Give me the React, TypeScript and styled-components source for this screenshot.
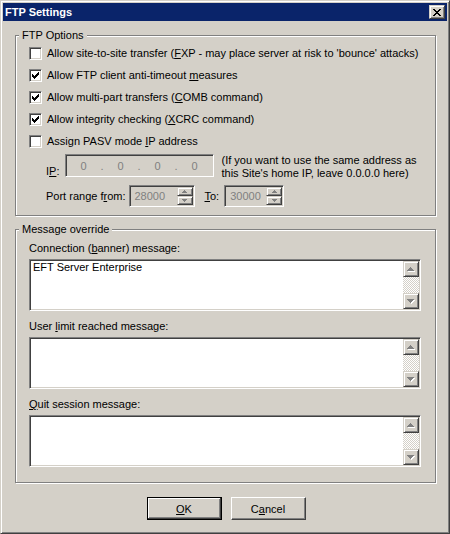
import React from 'react';
import styled, { createGlobalStyle } from 'styled-components';

const Global = createGlobalStyle`
  html, body { margin: 0; padding: 0; background: #D4D0C8; }
  body { font-family: "Liberation Sans", Arial, sans-serif; font-size: 11px; color: #000; }
  * { box-sizing: border-box; }
  u { text-decoration: underline; text-underline-offset: 1px; text-decoration-thickness: 1px; }
`;

const Window = styled.div`
  width: 450px;
  height: 534px;
  background: #D4D0C8;
  border: 1px solid;
  border-color: #D4D0C8 #404040 #404040 #D4D0C8;
  box-shadow: inset 1px 1px #fff, inset -1px -1px #808080;
  padding: 2px;
  display: flex;
  flex-direction: column;
`;

const TitleBar = styled.div`
  height: 18px;
  margin-bottom: 1px;
  background: #0A246A;
  display: flex;
  align-items: center;
  justify-content: space-between;
  padding: 0 2px 0 2px;
`;

const TitleText = styled.span`
  color: #fff;
  font-weight: bold;
  font-size: 11px;
  line-height: 18px;
`;

const raised = `
  border: 1px solid;
  border-color: #D4D0C8 #404040 #404040 #D4D0C8;
  box-shadow: inset 1px 1px #fff, inset -1px -1px #808080;
  background: #D4D0C8;
`;

const sunken = `
  border: 1px solid;
  border-color: #808080 #fff #fff #808080;
  box-shadow: inset 1px 1px #404040, inset -1px -1px #D4D0C8;
`;

const CloseButton = styled.div`
  width: 16px;
  height: 14px;
  ${raised}
  display: flex;
  align-items: center;
  justify-content: center;
`;

const Content = styled.div`
  flex: 1;
  display: flex;
  flex-direction: column;
  padding: 13px 10px 0 12px;
`;

const Group = styled.div<{ $pt: number; $pb: number }>`
  position: relative;
  width: 421px;
  border: 1px solid #808080;
  box-shadow: inset 1px 1px #fff, 1px 1px #fff;
  padding: ${(p) => p.$pt}px 12px ${(p) => p.$pb}px 13px;
  margin-bottom: 13px;
  display: flex;
  flex-direction: column;
`;

const Legend = styled.span`
  position: absolute;
  top: -7px;
  left: 3px;
  padding: 0 3px;
  background: #D4D0C8;
  line-height: 13px;
`;

const CheckList = styled.div`
  display: flex;
  flex-direction: column;
  gap: 9px;
`;

const CheckRow = styled.label`
  display: flex;
  align-items: center;
  gap: 5px;
  height: 13px;
  line-height: 13px;
  white-space: nowrap;
`;

const CheckBox = styled.span`
  width: 13px;
  height: 13px;
  flex: none;
  background: #fff;
  ${sunken}
  display: flex;
  align-items: center;
  justify-content: center;
`;

const IPRow = styled.div`
  display: flex;
  align-items: flex-start;
  height: 23px;
  margin-top: 6px;
  padding-left: 17px;
`;

const IPLabel = styled.span`
  line-height: 13px;
  margin-top: 11px;
  margin-right: 6px;
`;

const IPField = styled.div`
  width: 149px;
  height: 23px;
  ${sunken}
  background: #D4D0C8;
  display: flex;
  align-items: center;
  padding-left: 2px;
  color: #808080;
`;

const Octet = styled.span`
  width: 30px;
  text-align: center;
`;

const Dot = styled.span`
  width: 7px;
  text-align: center;
`;

const Hint = styled.div`
  margin-left: 7px;
  line-height: 13px;
  white-space: nowrap;
`;

const PortRow = styled.div`
  display: flex;
  align-items: center;
  margin-top: 8px;
  padding-left: 17px;
  line-height: 13px;
`;

const PortLabel = styled.span<{ $ml?: number; $mr: number }>`
  margin-left: ${(p) => p.$ml ?? 0}px;
  margin-right: ${(p) => p.$mr}px;
`;

const SpinField = styled.div<{ $w: number }>`
  width: ${(p) => p.$w}px;
  height: 22px;
  ${sunken}
  background: #D4D0C8;
  display: flex;
  align-items: stretch;
  color: #808080;
`;

const SpinText = styled.span`
  flex: 1;
  padding-left: 5px;
  display: flex;
  align-items: center;
`;

const SpinButtons = styled.div`
  width: 16px;
  margin: 1px 1px 1px 0;
  display: flex;
  flex-direction: column;
`;

const SpinBtn = styled.div`
  flex: 1;
  ${raised}
  display: flex;
  align-items: center;
  justify-content: center;
`;

const MsgLabel = styled.div`
  line-height: 13px;
  margin-bottom: 4px;
`;

const MsgBox = styled.div`
  width: 392px;
  height: 52px;
  ${sunken}
  background: #fff;
  display: flex;
  margin-bottom: 9px;
  &:last-child { margin-bottom: 0; }
`;

const MsgText = styled.div`
  flex: 1;
  padding: 1px 3px 0 3px;
  line-height: 13px;
`;

const ScrollBar = styled.div`
  width: 16px;
  margin: 1px 1px 1px 0;
  display: flex;
  flex-direction: column;
`;

const ScrollBtn = styled.div`
  width: 16px;
  height: 16px;
  flex: none;
  ${raised}
  display: flex;
  align-items: center;
  justify-content: center;
`;

const Track = styled.div`
  flex: 1;
  background: repeating-conic-gradient(#fff 0 25%, #D4D0C8 0 50%);
  background-size: 2px 2px;
`;

const ButtonRow = styled.div`
  display: flex;
  justify-content: center;
  gap: 9px;
  margin-top: 1px;
`;

const Button = styled.button<{ $default?: boolean }>`
  width: 75px;
  height: 23px;
  padding: 0;
  font-family: inherit;
  font-size: 11px;
  color: #000;
  background: #D4D0C8;
  border: 1px solid;
  ${(p) =>
    p.$default
      ? `border-color: #000;
         box-shadow: inset -1px -1px #404040, inset 1px 1px #fff, inset -2px -2px #808080;`
      : `border-color: #fff #404040 #404040 #fff;
         box-shadow: inset -1px -1px #808080;`}
`;

const Pixels: React.FC<{ rows: string[]; color: string; shadow?: string }> = ({ rows, color, shadow }) => {
  const w = rows[0].length + (shadow ? 1 : 0);
  const h = rows.length + (shadow ? 1 : 0);
  const rects: React.ReactNode[] = [];
  const draw = (dx: number, fill: string, key: string) => {
    rows.forEach((r, y) =>
      r.split('').forEach((c, x) => {
        if (c === 'X') rects.push(<rect key={`${key}${x}-${y}`} x={x + dx} y={y + dx} width={1} height={1} fill={fill} />);
      })
    );
  };
  if (shadow) draw(1, shadow, 's');
  draw(0, color, 'm');
  return (
    <svg width={w} height={h} viewBox={`0 0 ${w} ${h}`} shapeRendering="crispEdges" style={{ display: 'block' }}>
      {rects}
    </svg>
  );
};

const CHECK = ['......X', '.....XX', 'X...XXX', 'XX.XXX.', 'XXXXX..', '.XXX...', '..X....'];
const CLOSE = ['XX....XX', '.XX..XX.', '..XXXX..', '...XX...', '..XXXX..', '.XX..XX.', 'XX....XX'];
const UP = ['...X...', '..XXX..', '.XXXXX.', 'XXXXXXX'];
const DOWN = ['XXXXXXX', '.XXXXX.', '..XXX..', '...X...'];
const SUP = ['..X..', '.XXX.', 'XXXXX'];
const SDOWN = ['XXXXX', '.XXX.', '..X..'];

const Check: React.FC<{ checked?: boolean; children: React.ReactNode }> = ({ checked, children }) => (
  <CheckRow>
    <CheckBox>{checked && <Pixels rows={CHECK} color="#000" />}</CheckBox>
    <span>{children}</span>
  </CheckRow>
);

const Spin: React.FC<{ value: string; w: number }> = ({ value, w }) => (
  <SpinField $w={w}>
    <SpinText>{value}</SpinText>
    <SpinButtons>
      <SpinBtn>
        <Pixels rows={SUP} color="#808080" />
      </SpinBtn>
      <SpinBtn>
        <Pixels rows={SDOWN} color="#808080" />
      </SpinBtn>
    </SpinButtons>
  </SpinField>
);

const Message: React.FC<{ text?: string }> = ({ text }) => (
  <MsgBox>
    <MsgText>{text}</MsgText>
    <ScrollBar>
      <ScrollBtn>
        <Pixels rows={UP} color="#808080" shadow="#fff" />
      </ScrollBtn>
      <Track />
      <ScrollBtn>
        <Pixels rows={DOWN} color="#808080" shadow="#fff" />
      </ScrollBtn>
    </ScrollBar>
  </MsgBox>
);

export default function App() {
  return (
    <>
      <Global />
      <Window>
        <TitleBar>
          <TitleText>FTP Settings</TitleText>
          <CloseButton>
            <Pixels rows={CLOSE} color="#000" />
          </CloseButton>
        </TitleBar>
        <Content>
          <Group $pt={11} $pb={8}>
            <Legend>FTP Options</Legend>
            <CheckList>
              <Check>
                Allow site-to-site transfer (<u>F</u>XP - may place server at risk to 'bounce' attacks)
              </Check>
              <Check checked>
                Allow FTP client anti-timeout <u>m</u>easures
              </Check>
              <Check checked>
                Allow multi-part transfers (<u>C</u>OMB command)
              </Check>
              <Check checked>
                Allow integrity checking (<u>X</u>CRC command)
              </Check>
              <Check>
                Assign PASV mode <u>I</u>P address
              </Check>
            </CheckList>
            <IPRow>
              <IPLabel>
                I<u>P</u>:
              </IPLabel>
              <IPField>
                <Octet>0</Octet>
                <Dot>.</Dot>
                <Octet>0</Octet>
                <Dot>.</Dot>
                <Octet>0</Octet>
                <Dot>.</Dot>
                <Octet>0</Octet>
              </IPField>
              <Hint>
                (If you want to use the same address as
                <br />
                this Site's home IP, leave 0.0.0.0 here)
              </Hint>
            </IPRow>
            <PortRow>
              <PortLabel $mr={3}>
                Port range f<u>r</u>om:
              </PortLabel>
              <Spin value="28000" w={66} />
              <PortLabel $ml={10} $mr={5}>
                <u>T</u>o:
              </PortLabel>
              <Spin value="30000" w={60} />
            </PortRow>
          </Group>
          <Group $pt={12} $pb={15}>
            <Legend>Message override</Legend>
            <MsgLabel>
              Connection (<u>b</u>anner) message:
            </MsgLabel>
            <Message text="EFT Server Enterprise" />
            <MsgLabel>
              User <u>l</u>imit reached message:
            </MsgLabel>
            <Message />
            <MsgLabel>
              <u>Q</u>uit session message:
            </MsgLabel>
            <Message />
          </Group>
          <ButtonRow>
            <Button $default>
              <u>O</u>K
            </Button>
            <Button>
              C<u>a</u>ncel
            </Button>
          </ButtonRow>
        </Content>
      </Window>
    </>
  );
}
